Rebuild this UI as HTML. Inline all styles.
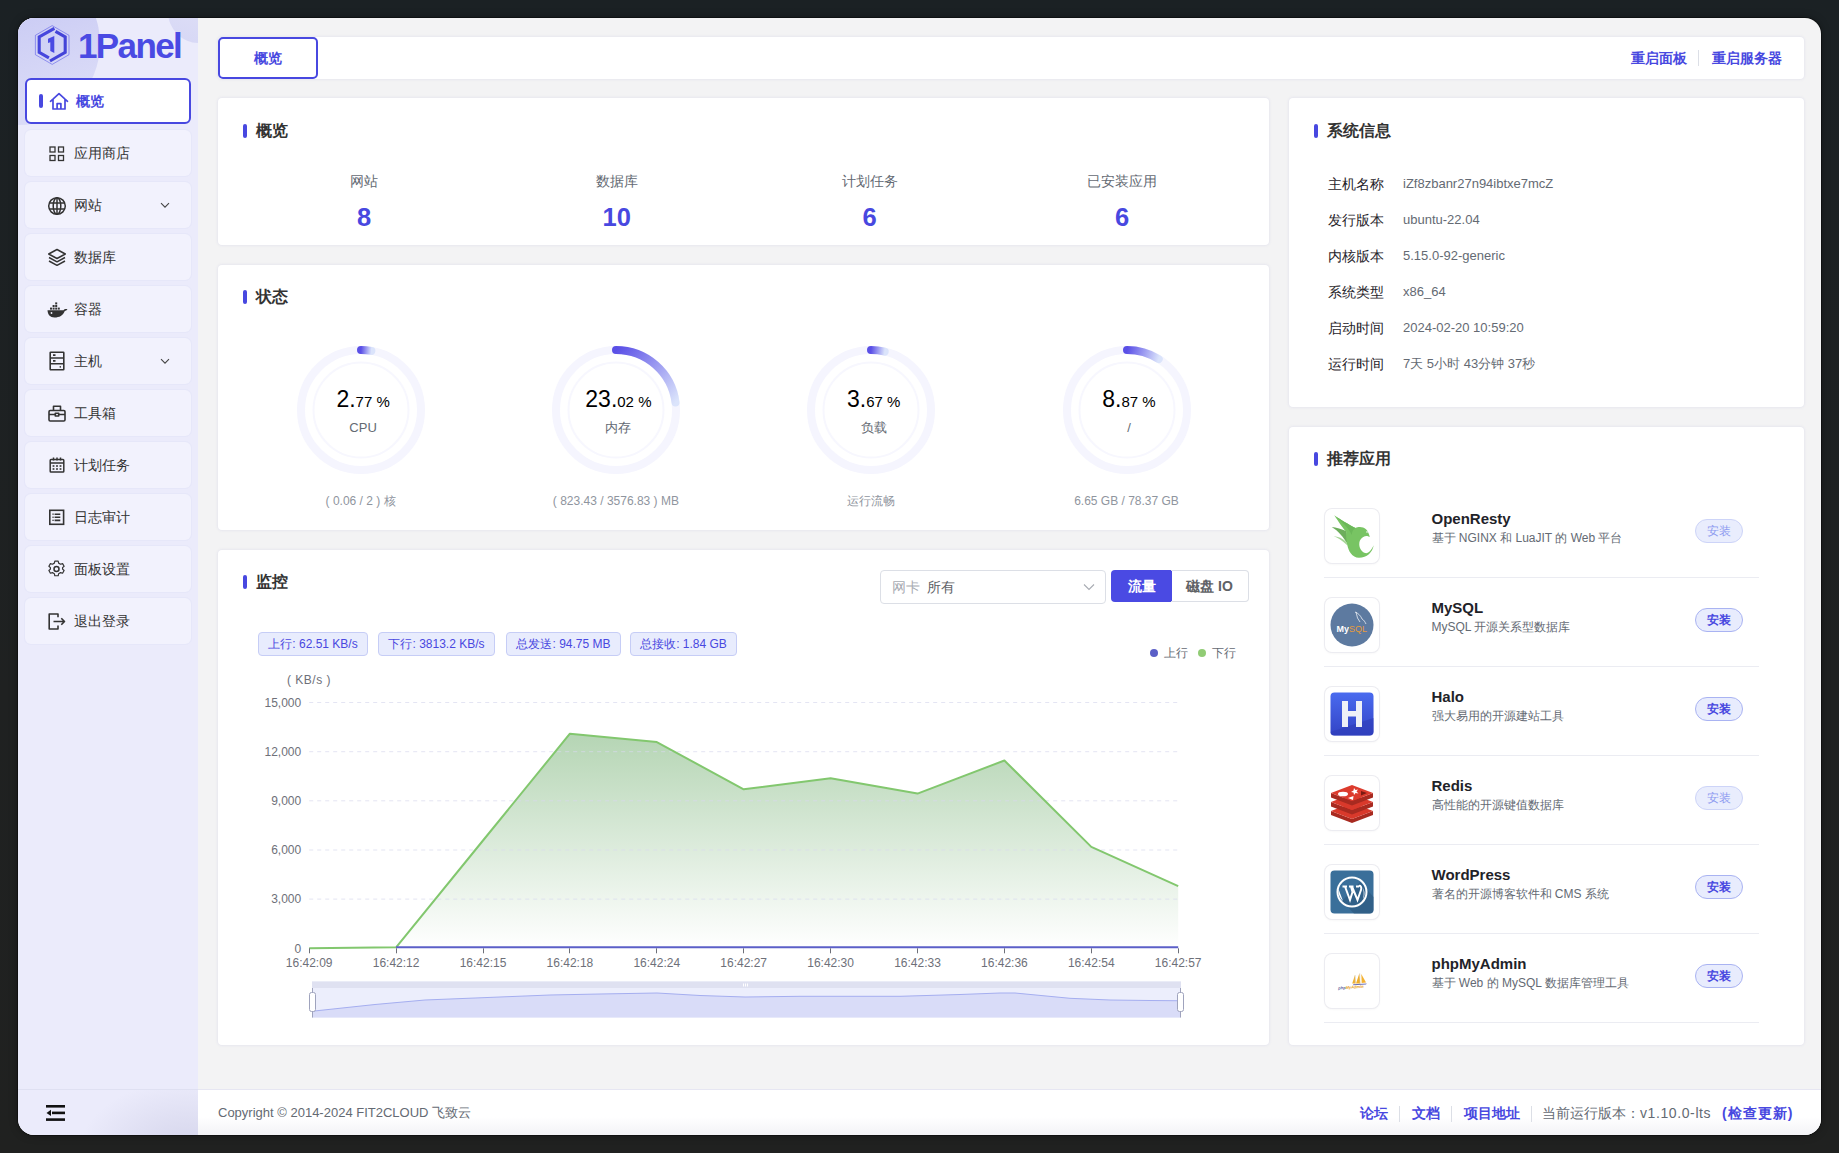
<!DOCTYPE html>
<html><head><meta charset="utf-8">
<style>
*{box-sizing:border-box;margin:0;padding:0}
html,body{width:1839px;height:1153px;overflow:hidden;background:linear-gradient(#1b2124,#1f2121 60%,#202120);font-family:"Liberation Sans",sans-serif;color:#1f2329}
.abs{position:absolute}
#win{position:absolute;left:18px;top:18px;width:1803px;height:1117px;border-radius:16px;overflow:hidden;background:#f3f3f4;box-shadow:0 0 0 1px rgba(0,0,0,.35),0 0 8px rgba(0,0,0,.35)}
#side{position:absolute;left:0;top:0;width:180px;height:1117px;background:#ebebfb;overflow:hidden}
.mi{position:absolute;left:7px;width:166px;height:46px;border-radius:6px;background:#f2f2fd;box-shadow:0 0 0 1px rgba(222,224,246,.35);font-size:14px;color:#333}
.mi .t{position:absolute;left:49px;top:14px;line-height:18px}
.mi svg{position:absolute;left:24px;top:15px}
.mi.act{background:#fff;border:2px solid #4848e0;color:#4848e0;box-shadow:none}
.card{position:absolute;background:#fff;border-radius:4px;box-shadow:0 0 3px rgba(190,190,225,.45)}
.ttl{position:absolute;left:24px;font-size:16px;font-weight:bold;color:#333;line-height:20px;margin-top:1px}
.ttl:before{content:"";position:absolute;left:1px;top:3px;width:4px;height:14px;border-radius:2px;background:#4848e0}
.ttl span{margin-left:14px}
.lnk{font-size:14px;font-weight:bold;color:#4848e0;line-height:18px}
.ovl{width:200px;text-align:center;font-size:14px;color:#646a73;line-height:18px}
.ovn{width:200px;text-align:center;font-size:25.5px;font-weight:bold;color:#4848e0;line-height:28px}
.gv{width:200px;text-align:center;color:#000;line-height:28px}
.gb{font-size:23px}.gs{font-size:15px}
.gl{width:200px;text-align:center;font-size:13px;color:#646a73;line-height:18px}
.gbot{width:200px;text-align:center;font-size:12px;color:#8f959e;line-height:16px}
.tag{height:24px;border:1px solid #c6cdf6;background:#e8ecfd;border-radius:4px;color:#4848e0;font-size:12px;line-height:22px;text-align:center;white-space:nowrap}
.sil{font-size:14px;color:#1f2329;line-height:18px;white-space:nowrap}
.siv{font-size:13px;color:#646a73;line-height:18px;white-space:nowrap}
.appbox{width:54px;height:54px;border-radius:7px;background:#fff;box-shadow:0 0 0 1px #ececf1,0 1px 3px rgba(0,0,0,.06);padding:5px}
.appn{font-size:15px;font-weight:bold;color:#1f2329;line-height:18px;white-space:nowrap}
.appd{font-size:12px;color:#646a73;line-height:16px;white-space:nowrap}
.appb{width:48px;height:24px;border-radius:12px;background:#e8ecfd;border:1px solid #a9b3f2;color:#4848e0;font-size:12px;font-weight:bold;text-align:center;line-height:22px}
.appb.dis{background:#e9edfd;border-color:#cdd4f8;color:#8e9bf0;font-weight:normal}
.flk{font-size:14px;font-weight:bold;color:#4848e0;line-height:18px;white-space:nowrap}
</style></head><body>
<div id="win">
 <div id="side">
  <div class="abs" style="left:-81.5px;top:-56.5px;width:163px;height:163px;border-radius:50%;background:linear-gradient(160deg,#c5c6f3 20%,#dadbf7 80%)"></div>
  <div class="abs" style="left:150px;top:-37px;width:62px;height:62px;border-radius:50%;background:linear-gradient(200deg,#e3e3f8,#d6d7f5)"></div>
  <svg class="abs" style="left:16px;top:7px" width="36" height="40" viewBox="0 0 36 40">
   <polygon points="18.2,0.6 35,10.3 35,29.7 18.2,39.4 1.4,29.7 1.4,10.3" fill="none" stroke="#5252e6" stroke-width="0.6" opacity=".9"/>
   <path d="M20.4 3.3 L5.2 12 V27.3 L14.9 32.9" fill="none" stroke="#4646dd" stroke-width="3.1" stroke-linejoin="miter"/>
   <path d="M16 36 L31.2 27.3 V12 L21.5 6.4" fill="none" stroke="#4444d8" stroke-width="3.1" stroke-linejoin="miter"/>
   <path d="M14 13.8 L20.3 11 V27.9 L16.3 26 V17.2 L14 17.9 Z" fill="#4a4ae3"/>
  </svg>
  <div class="abs" style="left:60px;top:7.5px;font-size:35px;font-weight:bold;color:#4a4ae3;letter-spacing:-1.6px;line-height:40px">1Panel</div>
  <div class="mi act" style="top:60px">
   <div class="abs" style="left:12px;top:14px;width:4px;height:14px;border-radius:2px;background:#4848e0"></div>
   <svg class="abs" style="left:22px;top:12px" width="20" height="19" viewBox="0 0 20 19"><path d="M1.5 9.3 L10 1.6 L18.5 9.3 M4 7.2 V17 H16 V7.2 M8.1 17 V11.6 H11.9 V17" fill="none" stroke="#4848e0" stroke-width="1.7" stroke-linejoin="round" stroke-linecap="round"/></svg>
   <div class="t" style="left:49px;top:12px;font-weight:bold">概览</div></div>
  <div class="mi" style="top:112px">
   <svg class="abs" style="left:24px;top:16px" width="16" height="16" viewBox="0 0 16 16"><g fill="none" stroke="#333" stroke-width="1.3"><rect x="1" y="1" width="5" height="5"/><rect x="9.5" y="1" width="5" height="5"/><rect x="1" y="9.5" width="5" height="5"/><rect x="9.5" y="9.5" width="5" height="5"/></g></svg>
   <div class="t">应用商店</div></div>
  <div class="mi" style="top:164px">
   <svg class="abs" style="left:22px;top:14px" width="20" height="20" viewBox="0 0 20 20"><g fill="none" stroke="#333" stroke-width="1.5"><circle cx="10" cy="10" r="8.3"/><ellipse cx="10" cy="10" rx="3.8" ry="8.3"/><path d="M10 1.7V18.3M2 7H18M2 13H18"/></g></svg>
   <div class="t">网站</div>
   <svg class="abs" style="left:135px;top:20px" width="10" height="7" viewBox="0 0 10 7"><path d="M1 1.2 L5 5.2 L9 1.2" fill="none" stroke="#444" stroke-width="1.1"/></svg></div>
  <div class="mi" style="top:216px">
   <svg class="abs" style="left:22px;top:14px" width="20" height="19" viewBox="0 0 20 19"><g fill="none" stroke="#333" stroke-width="1.5" stroke-linejoin="round"><path d="M10 1.5 L18.3 6 L10 10.5 L1.7 6 Z"/><path d="M2 9.5 L10 13.8 L18 9.5"/><path d="M2 13 L10 17.3 L18 13"/></g></svg>
   <div class="t">数据库</div></div>
  <div class="mi" style="top:268px">
   <svg class="abs" style="left:22px;top:16px" width="21" height="16" viewBox="0 0 21 16"><g fill="#333"><path d="M0.5 8.3 H16.5 C17.3 7.2 18.5 6.8 20.5 7.3 C19.6 8.3 18.8 8.9 17.8 9 C16 13.5 12.5 15.5 7.5 15.5 C3 15.5 0.8 12.5 0.5 8.3 Z"/><rect x="3" y="5.6" width="2" height="2"/><rect x="5.6" y="5.6" width="2" height="2"/><rect x="8.2" y="5.6" width="2" height="2"/><rect x="10.8" y="5.6" width="2" height="2"/><rect x="5.6" y="3" width="2" height="2"/><rect x="8.2" y="3" width="2" height="2"/><rect x="8.2" y="0.4" width="2" height="2"/></g><circle cx="4.5" cy="11" r="0.9" fill="#f2f2fd"/></svg>
   <div class="t">容器</div></div>
  <div class="mi" style="top:320px">
   <svg class="abs" style="left:24px;top:13px" width="16" height="20" viewBox="0 0 16 20"><g fill="none" stroke="#333" stroke-width="1.6"><rect x="1.2" y="1.2" width="13.6" height="17.6" rx="0.6"/><path d="M1.2 7H14.8M1.2 12.8H14.8M4 4.1H6.5M4 9.9H6.5"/></g><circle cx="11.3" cy="15.9" r="0.8" fill="#333"/></svg>
   <div class="t">主机</div>
   <svg class="abs" style="left:135px;top:20px" width="10" height="7" viewBox="0 0 10 7"><path d="M1 1.2 L5 5.2 L9 1.2" fill="none" stroke="#444" stroke-width="1.1"/></svg></div>
  <div class="mi" style="top:372px">
   <svg class="abs" style="left:23px;top:15px" width="18" height="17" viewBox="0 0 18 17"><g fill="none" stroke="#333" stroke-width="1.6" stroke-linejoin="round"><rect x="1" y="5.5" width="16" height="10.5" rx="1.2"/><path d="M5.5 5.5 V1.2 H12.5 V5.5 M1 9.5 H17"/><rect x="7.3" y="8.2" width="3.4" height="2.8" fill="#f2f2fd"/></g></svg>
   <div class="t">工具箱</div></div>
  <div class="mi" style="top:424px">
   <svg class="abs" style="left:24px;top:15px" width="16" height="16" viewBox="0 0 16 16"><g fill="none" stroke="#333" stroke-width="1.5"><rect x="1.2" y="2.6" width="13.6" height="12.4" rx="0.8"/><path d="M1.2 6H14.8M4.5 0.6V3.6M8 0.6V3.6M11.5 0.6V3.6"/></g><g fill="#333"><rect x="3.6" y="8.2" width="1.8" height="1.6"/><rect x="7.1" y="8.2" width="1.8" height="1.6"/><rect x="10.6" y="8.2" width="1.8" height="1.6"/><rect x="3.6" y="11.2" width="1.8" height="1.6"/><rect x="7.1" y="11.2" width="1.8" height="1.6"/><rect x="10.6" y="11.2" width="1.8" height="1.6"/></g></svg>
   <div class="t">计划任务</div></div>
  <div class="mi" style="top:476px">
   <svg class="abs" style="left:23px;top:15px" width="17" height="17" viewBox="0 0 17 17"><g fill="none" stroke="#333" stroke-width="1.6"><rect x="1.8" y="1.3" width="13.8" height="14"/><path d="M6.6 5.2H12.3M6.6 8.3H12.3M6.6 11.4H12.3"/></g><g fill="#333"><rect x="4.4" y="4.5" width="1.3" height="1.3"/><rect x="4.4" y="7.6" width="1.3" height="1.3"/><rect x="4.4" y="10.7" width="1.3" height="1.3"/></g></svg>
   <div class="t">日志审计</div></div>
  <div class="mi" style="top:528px">
   <svg class="abs" style="left:22px;top:13px" width="19" height="20" viewBox="0 0 19 20"><g fill="none" stroke="#333" stroke-width="1.5" stroke-linejoin="round"><path d="M7.4 1.3 H11.6 L12.2 3.9 L14.6 5.3 L17.1 4.5 L19 7.8 L17.1 9.6 V11.4 L19 13.2 L17.1 16.5 L14.6 15.7 L12.2 17.1 L11.6 19.7 H7.4 L6.8 17.1 L4.4 15.7 L1.9 16.5 L0 13.2 L1.9 11.4 V9.6 L0 7.8 L1.9 4.5 L4.4 5.3 L6.8 3.9 Z" transform="translate(1.9,1) scale(0.8)"/><circle cx="9.5" cy="10" r="2.5"/></g></svg>
   <div class="t">面板设置</div></div>
  <div class="mi" style="top:580px">
   <svg class="abs" style="left:23px;top:15px" width="18" height="17" viewBox="0 0 18 17"><g fill="none" stroke="#333" stroke-width="1.6" stroke-linejoin="round"><path d="M10 4.2 V1 H1.2 V16 H10 V12.6"/><path d="M5.5 8.5 H16.5 M13.3 5.3 L16.5 8.5 L13.3 11.7"/></g></svg>
   <div class="t">退出登录</div></div>
  <div class="abs" style="left:0;top:1071px;width:180px;height:1px;background:#dfe0f2"></div>
  <div class="abs" style="left:0;top:1072px;width:180px;height:45px;overflow:hidden"><div class="abs" style="left:60px;top:-10px;width:220px;height:150px;border-radius:50%;background:radial-gradient(closest-side,#d3d3ea,rgba(226,226,246,0))"></div></div>
  <svg class="abs" style="left:27px;top:1086px" width="21" height="18" viewBox="0 0 21 18"><g fill="#111"><rect x="1" y="1" width="19" height="2.6"/><rect x="7" y="7.6" width="13" height="2.6"/><rect x="1" y="14.3" width="19" height="2.6"/><path d="M1.5 8.9 L6 5.8 V12 Z"/></g></svg>
 </div>
 <!-- top bar -->
 <div class="card" style="left:200px;top:19px;width:1586px;height:42px;border-radius:4px">
  <div class="abs" style="left:0;top:0;width:100px;height:42px;border:2px solid #4848e0;border-radius:5px;background:#fff;color:#4848e0;font-size:14px;font-weight:bold;text-align:center;line-height:39px">概览</div>
  <div class="abs lnk" style="left:1413px;top:12px">重启面板</div>
  <div class="abs" style="left:1480px;top:13px;width:1px;height:16px;background:#dcdfe6"></div>
  <div class="abs lnk" style="left:1494px;top:12px">重启服务器</div>
 </div>
 <!-- overview -->
 <div class="card" style="left:200px;top:80px;width:1051px;height:147px">
  <div class="ttl" style="top:22px"><span>概览</span></div>
  <div class="abs ovl" style="left:46.0px;top:74px">网站</div>
  <div class="abs ovn" style="left:46.0px;top:105px">8</div>
  <div class="abs ovl" style="left:298.8px;top:74px">数据库</div>
  <div class="abs ovn" style="left:298.8px;top:105px">10</div>
  <div class="abs ovl" style="left:551.5px;top:74px">计划任务</div>
  <div class="abs ovn" style="left:551.5px;top:105px">6</div>
  <div class="abs ovl" style="left:804.2px;top:74px">已安装应用</div>
  <div class="abs ovn" style="left:804.2px;top:105px">6</div>
 </div>
 <!-- status -->
 <div class="card" style="left:200px;top:247px;width:1051px;height:265px">
  <div class="ttl" style="top:21px"><span>状态</span></div>
  <svg class="abs" style="left:72.6px;top:74.5px" width="140" height="140" viewBox="0 0 140 140">
   <defs><linearGradient id="g0" gradientUnits="userSpaceOnUse" x1="70" y1="10" x2="80.39" y2="10.91"><stop offset="0" stop-color="#5a4fe6"/><stop offset="1" stop-color="#dbe4fb"/></linearGradient></defs>
   <circle cx="70" cy="70" r="60" fill="none" stroke="#f5f5fe" stroke-width="8"/>
   <circle cx="70" cy="70" r="47.5" fill="none" stroke="#f7f7fe" stroke-width="2"/>
   <path d="M70 10 A60 60 0 0 1 80.39 10.91" fill="none" stroke="url(#g0)" stroke-width="8" stroke-linecap="round"/>
  </svg>
  <div class="abs gv" style="left:45.1px;top:119.5px"><span class="gb">2.</span><span class="gs">77 %</span></div>
  <div class="abs gl" style="left:45.1px;top:153.5px">CPU</div>
  <div class="abs gbot" style="left:42.6px;top:227.5px">( 0.06 / 2 ) 核</div>
  <svg class="abs" style="left:327.9px;top:74.5px" width="140" height="140" viewBox="0 0 140 140">
   <defs><linearGradient id="g1" gradientUnits="userSpaceOnUse" x1="70" y1="10" x2="129.54" y2="62.55"><stop offset="0" stop-color="#5a4fe6"/><stop offset="1" stop-color="#dbe4fb"/></linearGradient></defs>
   <circle cx="70" cy="70" r="60" fill="none" stroke="#f5f5fe" stroke-width="8"/>
   <circle cx="70" cy="70" r="47.5" fill="none" stroke="#f7f7fe" stroke-width="2"/>
   <path d="M70 10 A60 60 0 0 1 129.54 62.55" fill="none" stroke="url(#g1)" stroke-width="8" stroke-linecap="round"/>
  </svg>
  <div class="abs gv" style="left:300.4px;top:119.5px"><span class="gb">23.</span><span class="gs">02 %</span></div>
  <div class="abs gl" style="left:300.4px;top:153.5px">内存</div>
  <div class="abs gbot" style="left:297.9px;top:227.5px">( 823.43 / 3576.83 ) MB</div>
  <svg class="abs" style="left:583.2px;top:74.5px" width="140" height="140" viewBox="0 0 140 140">
   <defs><linearGradient id="g2" gradientUnits="userSpaceOnUse" x1="70" y1="10" x2="83.71" y2="11.59"><stop offset="0" stop-color="#5a4fe6"/><stop offset="1" stop-color="#dbe4fb"/></linearGradient></defs>
   <circle cx="70" cy="70" r="60" fill="none" stroke="#f5f5fe" stroke-width="8"/>
   <circle cx="70" cy="70" r="47.5" fill="none" stroke="#f7f7fe" stroke-width="2"/>
   <path d="M70 10 A60 60 0 0 1 83.71 11.59" fill="none" stroke="url(#g2)" stroke-width="8" stroke-linecap="round"/>
  </svg>
  <div class="abs gv" style="left:555.7px;top:119.5px"><span class="gb">3.</span><span class="gs">67 %</span></div>
  <div class="abs gl" style="left:555.7px;top:153.5px">负载</div>
  <div class="abs gbot" style="left:553.2px;top:227.5px">运行流畅</div>
  <svg class="abs" style="left:838.5px;top:74.5px" width="140" height="140" viewBox="0 0 140 140">
   <defs><linearGradient id="g3" gradientUnits="userSpaceOnUse" x1="70" y1="10" x2="101.73" y2="19.08"><stop offset="0" stop-color="#5a4fe6"/><stop offset="1" stop-color="#dbe4fb"/></linearGradient></defs>
   <circle cx="70" cy="70" r="60" fill="none" stroke="#f5f5fe" stroke-width="8"/>
   <circle cx="70" cy="70" r="47.5" fill="none" stroke="#f7f7fe" stroke-width="2"/>
   <path d="M70 10 A60 60 0 0 1 101.73 19.08" fill="none" stroke="url(#g3)" stroke-width="8" stroke-linecap="round"/>
  </svg>
  <div class="abs gv" style="left:811.0px;top:119.5px"><span class="gb">8.</span><span class="gs">87 %</span></div>
  <div class="abs gl" style="left:811.0px;top:153.5px">/</div>
  <div class="abs gbot" style="left:808.5px;top:227.5px">6.65 GB / 78.37 GB</div>
 </div>
 <!-- monitor -->
 <div class="card" style="left:200px;top:532px;width:1051px;height:495px">
  <div class="ttl" style="top:21px"><span>监控</span></div>
  <div class="abs" style="left:662px;top:20px;width:226px;height:34px;border:1px solid #dcdfe6;border-radius:4px;font-size:14px;line-height:32px">
   <span class="abs" style="left:11px;top:0;color:#a8abb2">网卡</span><span class="abs" style="left:46px;top:0;color:#606266">所有</span>
   <svg class="abs" style="left:202px;top:12px" width="12" height="8" viewBox="0 0 12 8"><path d="M1 1.5 L6 6.5 L11 1.5" fill="none" stroke="#a8abb2" stroke-width="1.1"/></svg>
  </div>
  <div class="abs" style="left:893px;top:20px;width:61px;height:32px;background:#4a4ae3;border-radius:4px 0 0 4px;color:#fff;font-size:14px;font-weight:bold;text-align:center;line-height:32px">流量</div>
  <div class="abs" style="left:953px;top:20px;width:78px;height:32px;border:1px solid #dcdfe6;border-left:none;border-radius:0 4px 4px 0;color:#606266;font-size:14px;font-weight:bold;text-align:center;line-height:30px">磁盘 IO</div>
  <div class="abs tag" style="left:40px;top:82px;width:110px">上行: 62.51 KB/s</div>
  <div class="abs tag" style="left:160px;top:82px;width:117px">下行: 3813.2 KB/s</div>
  <div class="abs tag" style="left:288px;top:82px;width:115px">总发送: 94.75 MB</div>
  <div class="abs tag" style="left:412px;top:82px;width:107px">总接收: 1.84 GB</div>
  <div class="abs" style="left:932px;top:95px;font-size:12px;color:#646a73;line-height:16px;white-space:nowrap"><span style="display:inline-block;width:8px;height:8px;border-radius:50%;background:#5b5fc7;margin-right:5.5px;vertical-align:0px"></span>上行<span style="display:inline-block;width:8px;height:8px;border-radius:50%;background:#91cc75;margin:0 5.5px 0 10.5px;vertical-align:0px"></span>下行</div>
  <svg class="abs" style="left:0;top:0" width="1051" height="495" viewBox="0 0 1051 495" font-family="Liberation Sans, sans-serif" font-size="12" fill="#6e7079">
   <defs><linearGradient id="ga" x1="0" y1="0" x2="0" y2="1"><stop offset="0" stop-color="#b5d5b4"/><stop offset="1" stop-color="#ffffff"/></linearGradient></defs>
   <text x="69" y="134" text-anchor="start" letter-spacing="0.5">( KB/s )</text>
   <text x="83.2" y="403.3" text-anchor="end">0</text><text x="83.2" y="353.1" text-anchor="end">3,000</text><text x="83.2" y="304.0" text-anchor="end">6,000</text><text x="83.2" y="254.8" text-anchor="end">9,000</text><text x="83.2" y="205.7" text-anchor="end">12,000</text><text x="83.2" y="156.5" text-anchor="end">15,000</text>
   <path d="M91.2,398.3 L91.2,398.3 L178.1,397.3 L265.0,290.5 L351.9,183.7 L438.8,192.1 L525.7,239.3 L612.6,228.3 L699.5,243.6 L786.4,210.5 L873.3,296.9 L960.2,336.1 L960.2,398.3 Z" fill="url(#ga)"/>
   <line x1="91.2" y1="349.1" x2="960.2" y2="349.1" stroke="#d9dbee" opacity="0.7" stroke-width="1" stroke-dasharray="4,4"/><line x1="91.2" y1="300.0" x2="960.2" y2="300.0" stroke="#d9dbee" opacity="0.7" stroke-width="1" stroke-dasharray="4,4"/><line x1="91.2" y1="250.8" x2="960.2" y2="250.8" stroke="#d9dbee" opacity="0.7" stroke-width="1" stroke-dasharray="4,4"/><line x1="91.2" y1="201.7" x2="960.2" y2="201.7" stroke="#d9dbee" opacity="0.7" stroke-width="1" stroke-dasharray="4,4"/><line x1="91.2" y1="152.5" x2="960.2" y2="152.5" stroke="#d9dbee" opacity="0.7" stroke-width="1" stroke-dasharray="4,4"/>
   <polyline points="91.2,398.3 178.1,397.3 265.0,290.5 351.9,183.7 438.8,192.1 525.7,239.3 612.6,228.3 699.5,243.6 786.4,210.5 873.3,296.9 960.2,336.1" fill="none" stroke="#82c76e" stroke-width="2" stroke-linejoin="round"/>
   <polyline points="178.1,397.3 960.2,397.3" fill="none" stroke="#5b5fc7" stroke-width="2"/>
   <line x1="91.5" y1="398.3" x2="91.5" y2="403.3" stroke="#6e7079" stroke-width="1"/><text x="91.2" y="417.3" text-anchor="middle">16:42:09</text><line x1="178.5" y1="398.3" x2="178.5" y2="403.3" stroke="#6e7079" stroke-width="1"/><text x="178.1" y="417.3" text-anchor="middle">16:42:12</text><line x1="265.5" y1="398.3" x2="265.5" y2="403.3" stroke="#6e7079" stroke-width="1"/><text x="265.0" y="417.3" text-anchor="middle">16:42:15</text><line x1="351.5" y1="398.3" x2="351.5" y2="403.3" stroke="#6e7079" stroke-width="1"/><text x="351.9" y="417.3" text-anchor="middle">16:42:18</text><line x1="438.5" y1="398.3" x2="438.5" y2="403.3" stroke="#6e7079" stroke-width="1"/><text x="438.8" y="417.3" text-anchor="middle">16:42:24</text><line x1="525.5" y1="398.3" x2="525.5" y2="403.3" stroke="#6e7079" stroke-width="1"/><text x="525.7" y="417.3" text-anchor="middle">16:42:27</text><line x1="612.5" y1="398.3" x2="612.5" y2="403.3" stroke="#6e7079" stroke-width="1"/><text x="612.6" y="417.3" text-anchor="middle">16:42:30</text><line x1="699.5" y1="398.3" x2="699.5" y2="403.3" stroke="#6e7079" stroke-width="1"/><text x="699.5" y="417.3" text-anchor="middle">16:42:33</text><line x1="786.5" y1="398.3" x2="786.5" y2="403.3" stroke="#6e7079" stroke-width="1"/><text x="786.4" y="417.3" text-anchor="middle">16:42:36</text><line x1="873.5" y1="398.3" x2="873.5" y2="403.3" stroke="#6e7079" stroke-width="1"/><text x="873.3" y="417.3" text-anchor="middle">16:42:54</text><line x1="960.5" y1="398.3" x2="960.5" y2="403.3" stroke="#6e7079" stroke-width="1"/><text x="960.2" y="417.3" text-anchor="middle">16:42:57</text>
   <rect x="94" y="431.5" width="869" height="36" fill="#eceefc"/>
   <rect x="94" y="431.5" width="869" height="6.5" fill="#dfe1f1"/>
   <path d="M94,461.25 L157,454.5 L207,450 L257,448 L332,445 L382,444 L439,443 L482,445.5 L527,447 L582,446.3 L682,446.3 L742,444.5 L782,443 L797,443 L852,448.3 L892,450 L932,450.5 L962.5,450.75 L962.5,467.5 L94,467.5 Z" fill="#d9dcf8"/>
   <polyline points="94,461.25 157,454.5 207,450 257,448 332,445 382,444 439,443 482,445.5 527,447 582,446.3 682,446.3 742,444.5 782,443 797,443 852,448.3 892,450 932,450.5 962.5,450.75" fill="none" stroke="#a5aef0" stroke-width="1"/>
   <line x1="94.5" y1="438" x2="94.5" y2="467.5" stroke="#9fa3bd" stroke-width="1"/>
   <line x1="962.5" y1="438" x2="962.5" y2="467.5" stroke="#9fa3bd" stroke-width="1"/>
   <rect x="91.5" y="442.5" width="6" height="19" rx="2" fill="#fff" stroke="#9fa3bd" stroke-width="1"/>
   <rect x="959.5" y="442.5" width="6" height="19" rx="2" fill="#fff" stroke="#9fa3bd" stroke-width="1"/>
   <g fill="#fff"><rect x="525" y="433.5" width="1" height="3"/><rect x="527" y="433.5" width="1" height="3"/><rect x="529" y="433.5" width="1" height="3"/></g>
  </svg>
 </div>
 <div class="card" style="left:1271px;top:80px;width:515px;height:309px">
  <div class="ttl" style="top:22px"><span>系统信息</span></div>
  <div class="abs sil" style="left:39px;top:76.7px">主机名称</div><div class="abs siv" style="left:114px;top:76.7px">iZf8zbanr27n94ibtxe7mcZ</div>
  <div class="abs sil" style="left:39px;top:112.7px">发行版本</div><div class="abs siv" style="left:114px;top:112.7px">ubuntu-22.04</div>
  <div class="abs sil" style="left:39px;top:148.7px">内核版本</div><div class="abs siv" style="left:114px;top:148.7px">5.15.0-92-generic</div>
  <div class="abs sil" style="left:39px;top:184.7px">系统类型</div><div class="abs siv" style="left:114px;top:184.7px">x86_64</div>
  <div class="abs sil" style="left:39px;top:220.7px">启动时间</div><div class="abs siv" style="left:114px;top:220.7px">2024-02-20 10:59:20</div>
  <div class="abs sil" style="left:39px;top:256.7px">运行时间</div><div class="abs siv" style="left:114px;top:256.7px">7天 5小时 43分钟 37秒</div>
 </div>
 <div class="card" style="left:1271px;top:409px;width:515px;height:618px">
  <div class="ttl" style="top:21px"><span>推荐应用</span></div>
  <div class="abs appbox" style="left:35.5px;top:82.3px"><svg width="44" height="44" viewBox="5 5 44 44"><path d="M6.7,18.1 C11,18.6 17,20.3 21.5,22.3 L23,36 C18.5,28 12.5,21.5 6.7,18.1 Z" fill="#6dae5c"/><path d="M8.6,27.2 C13,27.3 18,29.5 21.5,33 L22.5,36.5 C17.5,31.5 12.5,28.5 8.6,27.2 Z" fill="#a6d696"/><path d="M9.3,6.2 C15,10.5 24,15.3 30.5,19.1 C33,17.6 38,17.4 41,20.3 C43,22.3 44,25 44.8,27.9 L42.3,27 C39.5,26.8 36.3,28.5 34.8,31.8 C33.2,36.5 35.2,42.3 40,44.1 C43.5,45.1 46.5,41 48.7,36.3 C47.5,43.5 42,48.7 34,48.7 C27,48.7 23.5,42 22.3,36 C21.3,31 20.8,26.5 21.3,22.8 C18,19.5 13.5,12.5 9.3,6.2 Z" fill="#78c463"/><path d="M9.3,6.2 C15,10.5 24,15.3 30.5,19.1 C28,20.5 27,23 26.8,26 C24,19 16,12 9.3,6.2Z" fill="#6cb85a"/><circle cx="42" cy="23" r="0.8" fill="#fff"/></svg></div>
  <div class="abs appn" style="left:142.5px;top:83.3px">OpenResty</div>
  <div class="abs appd" style="left:142.5px;top:102.8px">基于 NGINX 和 LuaJIT 的 Web 平台</div>
  <div class="abs appb dis" style="left:405.5px;top:92.3px">安装</div>
  <div class="abs" style="left:35px;top:150.0px;width:435px;height:1px;background:#ebecf2"></div>
  <div class="abs appbox" style="left:35.5px;top:171.3px"><svg width="44" height="44" viewBox="0 0 44 44"><circle cx="22" cy="22" r="21.5" fill="#5d7aa0"/><text x="6.5" y="28.5" font-family="Liberation Sans,sans-serif" font-weight="bold" font-size="9" fill="#fff">My<tspan fill="#e79a3a" font-weight="normal">SQL</tspan></text><path d="M25 9 C28 10 31 13 32 16 C34 17 35 19 36 21 M26 9 L27.5 15 L30 19" fill="none" stroke="#fff" stroke-width=".7"/></svg></div>
  <div class="abs appn" style="left:142.5px;top:172.3px">MySQL</div>
  <div class="abs appd" style="left:142.5px;top:191.8px">MySQL 开源关系型数据库</div>
  <div class="abs appb" style="left:405.5px;top:181.3px">安装</div>
  <div class="abs" style="left:35px;top:239.0px;width:435px;height:1px;background:#ebecf2"></div>
  <div class="abs appbox" style="left:35.5px;top:260.3px"><svg width="44" height="44" viewBox="0 0 44 44"><defs><linearGradient id="hg" x1="0" y1="0" x2="0" y2="1"><stop offset="0" stop-color="#4a6bef"/><stop offset="1" stop-color="#3343c6"/></linearGradient></defs><rect x="0.5" y="0.5" width="43" height="43" rx="4" fill="url(#hg)"/><path d="M0.5 40 L43.5 26 V39.5 Q43.5 43.5 39.5 43.5 H4.5 Q0.5 43.5 0.5 40Z" fill="#2f3db8" opacity=".6"/><path d="M12 9 H18 V19 H26 V9 H32 V35 H26 V24.5 H18 V35 H12 Z" fill="#eef0f7"/></svg></div>
  <div class="abs appn" style="left:142.5px;top:261.3px">Halo</div>
  <div class="abs appd" style="left:142.5px;top:280.8px">强大易用的开源建站工具</div>
  <div class="abs appb" style="left:405.5px;top:270.3px">安装</div>
  <div class="abs" style="left:35px;top:328.0px;width:435px;height:1px;background:#ebecf2"></div>
  <div class="abs appbox" style="left:35.5px;top:349.3px"><svg width="44" height="44" viewBox="0 0 44 44"><g><path d="M1 30 L22 38 L43 30 V34 L22 42 L1 34 Z" fill="#a82a20"/><path d="M1 30 L22 22 L43 30 L22 38 Z" fill="#d9392b"/><path d="M1 21 L22 29 L43 21 V25.5 L22 33.5 L1 25.5 Z" fill="#a82a20"/><path d="M1 21 L22 13 L43 21 L22 29 Z" fill="#d9392b"/><path d="M1 12 L22 20 L43 12 V16.5 L22 24.5 L1 16.5 Z" fill="#a82a20"/><path d="M1 12 L22 4 L43 12 L22 20 Z" fill="#dc3b2d"/><ellipse cx="13" cy="13" rx="5" ry="2.3" fill="#fff"/><path d="M24 7 L25.5 9 L28 8.5 L26.5 10.5 L28.5 12.5 L25.5 12 L24 14 L23.5 11.5 L21 11 L23.5 9.5Z" fill="#fff"/><path d="M18 17 L23.5 15 L23 19 Z" fill="#fff"/><path d="M31 10 L37 12 L31 14.5 Z" fill="#7a1a12"/></g></svg></div>
  <div class="abs appn" style="left:142.5px;top:350.3px">Redis</div>
  <div class="abs appd" style="left:142.5px;top:369.8px">高性能的开源键值数据库</div>
  <div class="abs appb dis" style="left:405.5px;top:359.3px">安装</div>
  <div class="abs" style="left:35px;top:417.0px;width:435px;height:1px;background:#ebecf2"></div>
  <div class="abs appbox" style="left:35.5px;top:438.3px"><svg width="44" height="44" viewBox="0 0 44 44"><rect x="0.5" y="0.5" width="43" height="43" rx="4" fill="#3a6f9a"/><path d="M30 12 L43.5 27 V39.5 Q43.5 43.5 39.5 43.5 H24 L12 31Z" fill="#2d5a80" opacity=".7"/><circle cx="22" cy="22" r="14.5" fill="none" stroke="#fff" stroke-width="2"/><path d="M12.5 16.5 H17 M15 16.5 L20 30 L22.5 22 L21 16.5 M19 16.5 H23.5 M22 16.5 L27.5 30 L31 20 C32 17 30.5 15.5 29 16 M26 16.5 H29" fill="none" stroke="#fff" stroke-width="2"/><path d="M8.5 19 C8 24 10 28 13 31 L8.5 19Z M33 18 C34.5 20.5 35 24 34 27 L31 34 C33.5 30 34.5 24 33 18Z" fill="#fff"/></svg></div>
  <div class="abs appn" style="left:142.5px;top:439.3px">WordPress</div>
  <div class="abs appd" style="left:142.5px;top:458.8px">著名的开源博客软件和 CMS 系统</div>
  <div class="abs appb" style="left:405.5px;top:448.3px">安装</div>
  <div class="abs" style="left:35px;top:506.0px;width:435px;height:1px;background:#ebecf2"></div>
  <div class="abs appbox" style="left:35.5px;top:527.3px"><svg width="44" height="44" viewBox="5 5 44 44"><path d="M27.2,29.6 L30,21 L30.6,29.6Z" fill="#f0b030"/><path d="M31,29.6 L34.3,19.6 L35.3,29.6Z" fill="#f2ae28"/><path d="M36.3,20 L41,28.6 L36.7,29.1Z" fill="#f4b232"/><path d="M30.2,21 V29.6 M34.8,19.3 V29.6" stroke="#c9c3b0" stroke-width=".5"/><path d="M28,30.2 L41.8,29.4 L41,30.6 L28.5,31.2Z" fill="#6b6fb5"/><text x="13.2" y="34.6" font-family="Liberation Sans,sans-serif" font-style="italic" font-weight="bold" font-size="4" fill="#5a5f9e" transform="rotate(-4 26 33)">php<tspan fill="#e8a020">MyAdmin</tspan></text></svg></div>
  <div class="abs appn" style="left:142.5px;top:528.3px">phpMyAdmin</div>
  <div class="abs appd" style="left:142.5px;top:547.8px">基于 Web 的 MySQL 数据库管理工具</div>
  <div class="abs appb" style="left:405.5px;top:537.3px">安装</div>
  <div class="abs" style="left:35px;top:595.0px;width:435px;height:1px;background:#ebecf2"></div>
 </div>
 <!-- footer -->
 <div class="abs" style="left:180px;top:1071px;width:1623px;height:46px;background:linear-gradient(#fff 0,#fff 60%,#f3f3f6 100%);border-top:1px solid #e6e6f2">
  <div class="abs" style="left:20px;top:15px;font-size:13px;color:#646a73;line-height:16px;white-space:nowrap">Copyright © 2014-2024 FIT2CLOUD 飞致云</div>
  <div class="abs flk" style="left:1162px;top:14px">论坛</div>
  <div class="abs" style="left:1201px;top:16px;width:1px;height:16px;background:#dcdfe6"></div>
  <div class="abs flk" style="left:1214px;top:14px">文档</div>
  <div class="abs" style="left:1253px;top:16px;width:1px;height:16px;background:#dcdfe6"></div>
  <div class="abs flk" style="left:1266px;top:14px">项目地址</div>
  <div class="abs" style="left:1333px;top:16px;width:1px;height:16px;background:#dcdfe6"></div>
  <div class="abs" style="left:1344px;top:14px;font-size:14px;color:#646a73;line-height:18px;white-space:nowrap">当前运行版本：<span style="letter-spacing:.6px">v1.10.0-lts</span></div>
  <div class="abs flk" style="left:1524px;top:14px;letter-spacing:1px">(检查更新)</div>
 </div>
</div>
</body></html>
